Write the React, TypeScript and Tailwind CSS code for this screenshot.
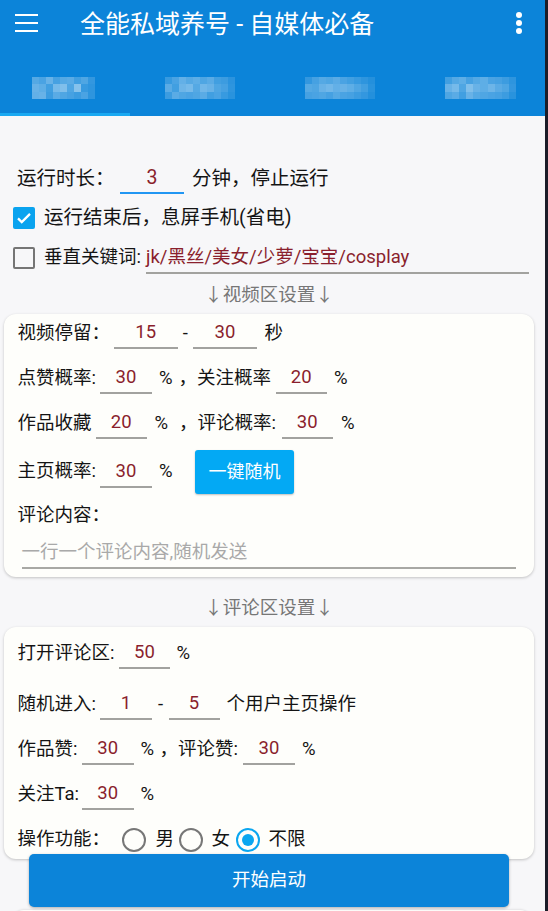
import React from 'react';

const tabs: { w: string; ml: string; rows: number[][] }[] = [
  {
    w: 'w-[63px]',
    ml: 'ml-[32px]',
    rows: [
      [0.22, 0.18, 0.3, 0.16, 0.22, 0.24, 0.14, 0.2, 0.08],
      [0.3, 0.26, 0.14, 0.36, 0.4, 0.2, 0.42, 0.1, 0.06],
      [0.28, 0.3, 0.12, 0.24, 0.2, 0.16, 0.12, 0.18, 0.06],
    ],
  },
  {
    w: 'w-[70px]',
    ml: 'ml-[70px]',
    rows: [
      [0.1, 0.18, 0.28, 0.22, 0.26, 0.2, 0.24, 0.14, 0.12, 0.05],
      [0.24, 0.14, 0.32, 0.36, 0.22, 0.34, 0.3, 0.2, 0.16, 0.06],
      [0.12, 0.24, 0.2, 0.18, 0.2, 0.24, 0.14, 0.18, 0.1, 0.04],
    ],
  },
  {
    w: 'w-[70px]',
    ml: 'ml-[70px]',
    rows: [
      [0.08, 0.16, 0.22, 0.2, 0.24, 0.18, 0.14, 0.1, 0.06, 0.02],
      [0.22, 0.2, 0.3, 0.34, 0.28, 0.3, 0.26, 0.2, 0.14, 0.04],
      [0.16, 0.18, 0.2, 0.16, 0.22, 0.18, 0.16, 0.12, 0.08, 0.02],
    ],
  },
  {
    w: 'w-[71px]',
    ml: 'ml-[70px]',
    rows: [
      [0.14, 0.22, 0.26, 0.16, 0.22, 0.26, 0.18, 0.16, 0.12, 0.06],
      [0.3, 0.36, 0.2, 0.4, 0.3, 0.26, 0.32, 0.24, 0.2, 0.08],
      [0.2, 0.24, 0.14, 0.3, 0.22, 0.2, 0.18, 0.16, 0.12, 0.04],
    ],
  },
];

const Field = ({ value, className = '' }: { value: string; className?: string }) => (
  <div
    className={`shrink-0 h-[30px] flex items-center justify-center border-b-2 border-[#a2a29f] text-[#8a1f2d] ${className}`}
  >
    {value}
  </div>
);

const Radio = ({ checked, className = '' }: { checked?: boolean; className?: string }) => (
  <span
    className={`shrink-0 w-[24px] h-[24px] rounded-full border-[2.5px] flex items-center justify-center ${
      checked ? 'border-[#0aa6f0]' : 'border-[#777]'
    } ${className}`}
  >
    {checked && <span className="w-[12px] h-[12px] rounded-full bg-[#0aa6f0]" />}
  </span>
);

const Card = ({ className = '', children }: { className?: string; children: React.ReactNode }) => (
  <div
    className={`ml-[4px] w-[530px] bg-[#fefefb] rounded-[12px] shadow-[0_1px_3px_rgba(0,0,0,0.22)] pl-[13.5px] text-[18.5px] ${className}`}
  >
    {children}
  </div>
);

const Row = ({ className = '', children }: { className?: string; children: React.ReactNode }) => (
  <div className={`h-[40px] flex items-center whitespace-nowrap ${className}`}>{children}</div>
);

export default function App() {
  return (
    <div className="relative w-[548px] h-[911px] overflow-hidden bg-[#f7f7f9] text-[#141414] font-['Roboto','Noto_Sans_CJK_SC',sans-serif]">
      <div className="absolute right-0 top-0 w-[3px] h-full bg-[#1c1c28] z-20" />

      {/* header */}
      <div className="bg-[#0c84d9] h-[116px] flex flex-col">
        <div className="h-[48px] flex items-center">
          <div className="ml-[15px] w-[23px] flex flex-col gap-[5.5px] mt-[-2px]">
            <span className="h-[2.5px] bg-white" />
            <span className="h-[2.5px] bg-white" />
            <span className="h-[2.5px] bg-white" />
          </div>
          <div className="ml-[42px] text-white text-[25px] leading-none whitespace-nowrap">全能私域养号 - 自媒体必备</div>
          <div className="ml-auto mr-[26px] flex flex-col gap-[2px] mt-[-2px]">
            <span className="w-[6px] h-[6px] rounded-full bg-white" />
            <span className="w-[6px] h-[6px] rounded-full bg-white" />
            <span className="w-[6px] h-[6px] rounded-full bg-white" />
          </div>
        </div>
        <div className="flex-1 flex flex-col">
          <div className="flex pt-[29px]">
            {tabs.map((t, i) => (
              <div key={i} className={`${t.ml} ${t.w} flex flex-col blur-[0.6px]`}>
                {t.rows.map((r, j) => (
                  <div key={j} className="flex h-[7.3px]">
                    {r.map((o, k) => (
                      <span key={k} className="flex-1 bg-white" style={{ opacity: o + 0.08 }} />
                    ))}
                  </div>
                ))}
              </div>
            ))}
          </div>
          <div className="mt-auto w-[130px] h-[3px] bg-[#1aa9f2]" />
        </div>
      </div>

      {/* top settings */}
      <div className="text-[19.5px] whitespace-nowrap">
        <div className="pl-[17px] pt-[45px]">
          <div className="h-[36px] flex items-center">
            <span className="w-[103px] shrink-0">运行时长：</span>
            <div className="w-[64px] h-[30px] flex items-center justify-center border-b-2 border-[#2196f3] text-[#8a1f2d]">
              3
            </div>
            <span className="ml-[8px]">分钟，停止运行</span>
          </div>
        </div>
        <div className="pl-[13px]">
          <div className="h-[42px] flex items-center">
            <span className="w-[22px] h-[22px] rounded-[2px] bg-[#0aa3ef] flex items-center justify-center">
              <svg viewBox="0 0 24 24" className="w-[18px] h-[18px]" fill="none" stroke="white" strokeWidth="3">
                <path d="M4 12.5l5 5L20 6.5" />
              </svg>
            </span>
            <span className="ml-[9px]">运行结束后，息屏手机(省电)</span>
          </div>
          <div className="h-[38px] flex items-center text-[18.5px]">
            <span className="w-[22px] h-[22px] rounded-[2px] border-2 border-[#757575]" />
            <span className="ml-[9px] w-[102px] shrink-0">垂直关键词:</span>
            <div className="w-[383px] h-[30px] flex items-center border-b-2 border-[#a2a29f] text-[#8a1f2d] mt-[1px]">
              jk/黑丝/美女/少萝/宝宝/cosplay
            </div>
          </div>
        </div>
        <div className="h-[37px] w-[538px] flex items-center justify-center text-[#767676] text-[18.5px]">
          ↓视频区设置↓
        </div>
      </div>

      {/* video card */}
      <Card>
        <Row>
          <span className="w-[96.5px] shrink-0">视频停留：</span>
          <Field value="15" className="w-[63.5px]" />
          <span className="w-[15.5px] text-center">-</span>
          <Field value="30" className="w-[64px]" />
          <span className="ml-[7.5px]">秒</span>
        </Row>
        <Row className="mt-[5px]">
          <span className="w-[82.5px] shrink-0">点赞概率:</span>
          <Field value="30" className="w-[52px]" />
          <span className="ml-[7px] w-[19.5px] shrink-0">%</span>
          <span className="w-[97px] shrink-0">，关注概率</span>
          <Field value="20" className="w-[51.5px]" />
          <span className="ml-[7px]">%</span>
        </Row>
        <Row className="mt-[5px]">
          <span className="w-[78px] shrink-0">作品收藏</span>
          <Field value="20" className="w-[51.5px]" />
          <span className="ml-[7.5px] w-[24.5px] shrink-0">%</span>
          <span className="w-[102.5px] shrink-0">，评论概率:</span>
          <Field value="30" className="w-[51.5px]" />
          <span className="ml-[8px]">%</span>
        </Row>
        <Row className="mt-[5px] h-[45px]">
          <span className="w-[82.5px] shrink-0">主页概率:</span>
          <Field value="30" className="w-[52px] mt-[2px]" />
          <span className="ml-[7px] w-[36px] shrink-0">%</span>
          <button
            type="button"
            className="w-[99px] h-[44px] rounded-[3px] bg-[#03a9f4] text-white text-[18px] shadow-[0_1px_2px_rgba(0,0,0,0.25)]"
          >
            一键随机
          </button>
        </Row>
        <div className="h-[43px] flex items-center">评论内容：</div>
        <div className="ml-[4px] w-[494.5px] h-[32px] leading-[30px] border-b-2 border-[#a8a8a4] text-[#a9a9a9]">
          一行一个评论内容,随机发送
        </div>
        <div className="h-[8px]" />
      </Card>

      <div className="mt-[13px] h-[37px] w-[538px] flex items-center justify-center text-[#767676] text-[18.5px]">
        ↓评论区设置↓
      </div>

      {/* comment card */}
      <Card className="pt-[7px] h-[232px]">
        <Row>
          <span className="w-[101.5px] shrink-0">打开评论区:</span>
          <Field value="50" className="w-[51px]" />
          <span className="ml-[6.5px]">%</span>
        </Row>
        <Row className="mt-[11px]">
          <span className="w-[82.5px] shrink-0">随机进入:</span>
          <Field value="1" className="w-[52px]" />
          <span className="w-[16.5px] pl-[6px] shrink-0">-</span>
          <Field value="5" className="w-[51px]" />
          <span className="ml-[7px]">个用户主页操作</span>
        </Row>
        <Row className="mt-[5px]">
          <span className="w-[64.5px] shrink-0">作品赞:</span>
          <Field value="30" className="w-[51.5px]" />
          <span className="ml-[7px] w-[19px] shrink-0">%</span>
          <span className="w-[83.5px] shrink-0">，评论赞:</span>
          <Field value="30" className="w-[52px]" />
          <span className="ml-[7px]">%</span>
        </Row>
        <Row className="mt-[5px]">
          <span className="w-[64.5px] shrink-0">关注Ta:</span>
          <Field value="30" className="w-[51.5px]" />
          <span className="ml-[7px]">%</span>
        </Row>
        <Row className="mt-[5px] h-[39px]">
          <span className="w-[104.5px] shrink-0">操作功能：</span>
          <Radio />
          <span className="ml-[9.5px]">男</span>
          <Radio className="ml-[5px]" />
          <span className="ml-[8.5px]">女</span>
          <Radio checked className="ml-[6px]" />
          <span className="ml-[8.5px]">不限</span>
        </Row>
      </Card>

      <button
        type="button"
        className="relative z-10 block -mt-[5px] ml-[29px] w-[480px] h-[53px] rounded-[5px] bg-[#0c84d9] text-white text-[18.5px] shadow-[0_1px_3px_rgba(0,0,0,0.3)]"
      >
        开始启动
      </button>
      <div className="mt-[3px] ml-[12px] w-[520px] h-[20px] bg-[#fefefb] rounded-t-[12px] shadow-[0_-1px_2px_rgba(0,0,0,0.08)]" />
    </div>
  );
}
